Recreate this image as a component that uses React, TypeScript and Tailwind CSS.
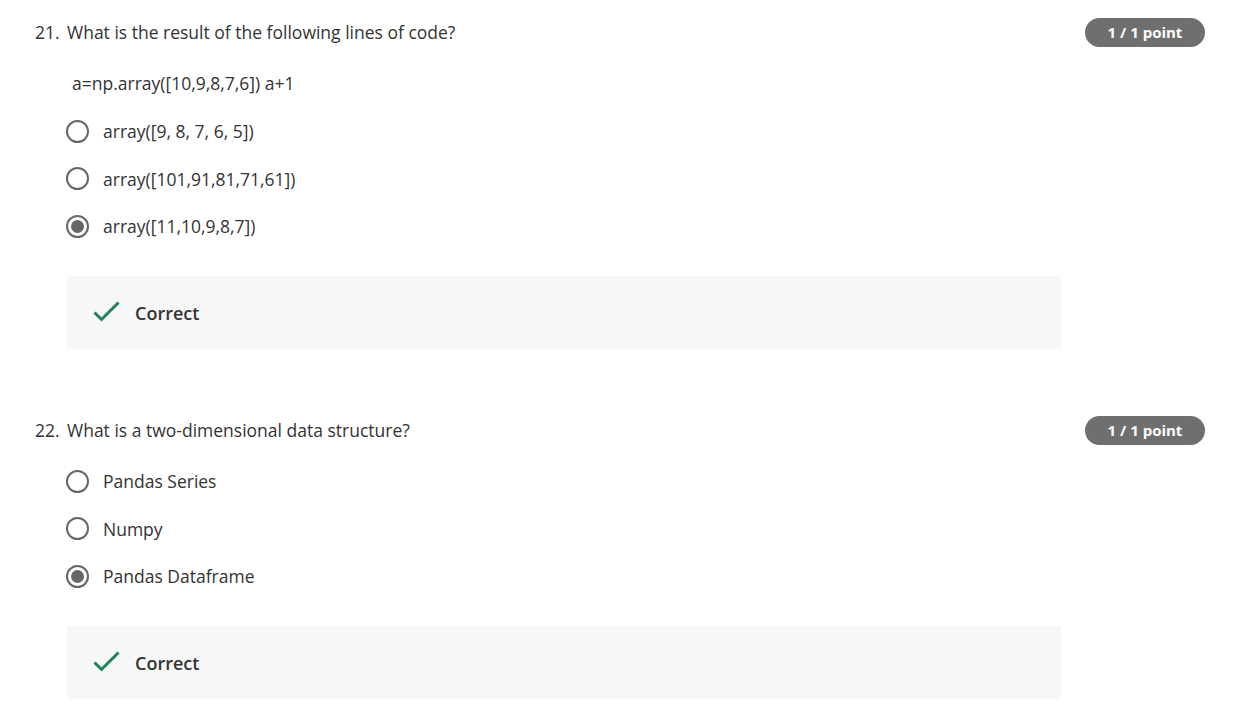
import React from "react";

const font = { fontFamily: '"Open Sans", "Noto Sans", sans-serif' };

function Radio({ checked }: { checked: boolean }) {
  return (
    <span className="w-[23px] h-[23px] rounded-full border-2 border-[#666666] flex items-center justify-center shrink-0">
      {checked && <span className="w-[13px] h-[13px] rounded-full bg-[#666666]" />}
    </span>
  );
}

function Option({ label, checked }: { label: string; checked?: boolean }) {
  return (
    <div className="h-[47.5px] flex items-center pl-[31px]">
      <Radio checked={!!checked} />
      <span className="ml-[14px] text-[17.5px] text-[#333333] leading-[24px]">{label}</span>
    </div>
  );
}

function Correct() {
  return (
    <div className="mt-[26px] ml-[32px] w-[994px] h-[73px] bg-[#f5f8f7] flex items-center pl-[26px]">
      <svg width="28" height="22" viewBox="0 0 28 22" className="mt-[-2px]">
        <polyline points="1.5,11.5 8.5,18.5 25.5,1.5" fill="none" stroke="#1f8354" strokeWidth="3" />
      </svg>
      <span className="ml-[14px] mt-[1px] text-[18px] font-semibold text-[#333333]">Correct</span>
    </div>
  );
}

function Header({ num, text }: { num: string; text: string }) {
  return (
    <div className="flex items-center justify-between h-[29px]">
      <div className="flex items-center text-[17.5px] text-[#333333] mt-[-1px]">
        <span className="w-[32px]">{num}</span>
        <span>{text}</span>
      </div>
      <div className="w-[120px] h-[29px] rounded-full bg-[#6f6f6f] text-white text-[15px] font-bold flex items-center justify-center">
        1 / 1 point
      </div>
    </div>
  );
}

export default function App() {
  return (
    <div className="w-[1240px] h-[720px] bg-white overflow-hidden px-[35px] pt-[18px]" style={font}>
      <Header num="21." text="What is the result of the following lines of code?" />
      <div className="mt-[24px] ml-[37px] h-[24px] leading-[24px] text-[17.5px] text-[#333333]">
        a=np.array([10,9,8,7,6]) a+1
      </div>
      <div className="mt-[12.5px]">
        <Option label="array([9, 8, 7, 6, 5])" />
        <Option label="array([101,91,81,71,61])" />
        <Option label="array([11,10,9,8,7])" checked />
      </div>
      <Correct />

      <div className="mt-[67px]">
        <Header num="22." text="What is a two-dimensional data structure?" />
      </div>
      <div className="mt-[12.5px]">
        <Option label="Pandas Series" />
        <Option label="Numpy" />
        <Option label="Pandas Dataframe" checked />
      </div>
      <Correct />
    </div>
  );
}
